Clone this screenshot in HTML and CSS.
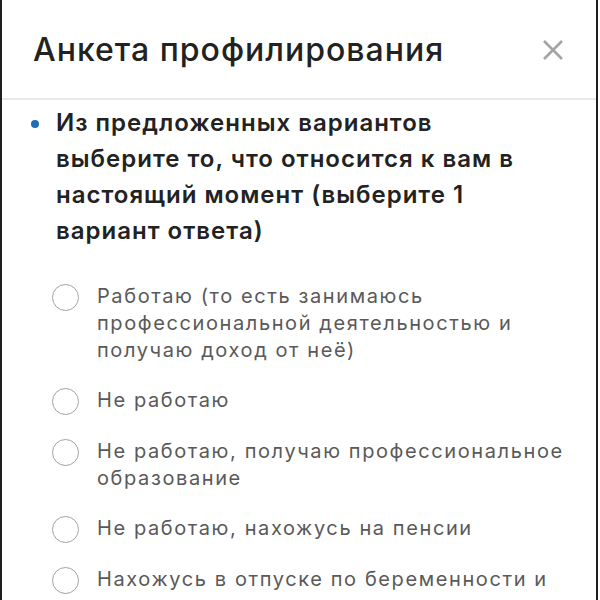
FILE: index.html
```html
<!DOCTYPE html>
<html lang="ru">
<head>
<meta charset="utf-8">
<title>Анкета профилирования</title>
<link rel="stylesheet" href="styles.css">
</head>
<body>
<div class="modal">
  <header class="head">
    <h1 class="title">Анкета профилирования</h1>
    <button class="close" aria-label="Закрыть">
      <svg width="20" height="20" viewBox="0 0 20 20"><path d="M1 1L19 19M19 1L1 19" stroke="#a4a4a4" stroke-width="2.6" fill="none"/></svg>
    </button>
  </header>
  <div class="content">
    <div class="question">
      <span class="dot"></span>
      <p class="qtext">Из предложенных вариантов<br>выберите то, что относится к вам в<br>настоящий момент (выберите 1<br>вариант ответа)</p>
    </div>
    <ul class="options">
      <li class="option"><span class="radio"></span><span class="label">Работаю (то есть занимаюсь<br>профессиональной деятельностью и<br>получаю доход от неё)</span></li>
      <li class="option"><span class="radio"></span><span class="label">Не работаю</span></li>
      <li class="option"><span class="radio"></span><span class="label">Не работаю, получаю профессиональное<br>образование</span></li>
      <li class="option"><span class="radio"></span><span class="label">Не работаю, нахожусь на пенсии</span></li>
      <li class="option"><span class="radio"></span><span class="label">Нахожусь в отпуске по беременности и</span></li>
    </ul>
  </div>
</div>
</body>
</html>
```
FILE: styles.css
```css
html, body {
  margin: 0;
  padding: 0;
  background: #ffffff;
}
.modal {
  margin-right: 2px;
  height: 600px;
  overflow: hidden;
  border-left: 2px solid #1e1e1e;
  border-right: 2px solid #1e1e1e;
  font-family: Inter, "Noto Sans", sans-serif;
  background: #ffffff;
}
.head {
  height: 98px;
  border-bottom: 2px solid #e8e8e8;
  display: flex;
  align-items: center;
  justify-content: space-between;
  padding: 2px 33px 0 31px;
  box-sizing: border-box;
  height: 100px;
}
.title {
  margin: 0;
  font-size: 32px;
  font-weight: 500;
  color: #222222;
  letter-spacing: 1px;
  line-height: 40px;
}
.close {
  border: 0;
  background: none;
  padding: 0;
  width: 20px;
  height: 20px;
  display: flex;
}
.content {
  padding: 5px 0 0 29px;
}
.question {
  display: flex;
  gap: 17px;
  align-items: flex-start;
}
.dot {
  flex: none;
  width: 8px;
  height: 8px;
  border-radius: 50%;
  background: #1f6db3;
  margin-top: 15px;
}
.qtext {
  margin: 0;
  font-size: 24px;
  font-weight: 600;
  line-height: 36px;
  color: #222222;
  letter-spacing: 1px;
}
.options {
  list-style: none;
  margin: 34px 0 0 0;
  padding: 0 0 0 21px;
  display: flex;
  flex-direction: column;
  gap: 23px;
}
.option {
  display: flex;
  gap: 18px;
  align-items: flex-start;
}
.radio {
  flex: none;
  width: 25px;
  height: 25px;
  border: 1.5px solid #a2a2a2;
  border-radius: 50%;
  margin-top: 1px;
}
.label {
  font-size: 20px;
  line-height: 27px;
  color: #595959;
  letter-spacing: 1.6px;
}
```
